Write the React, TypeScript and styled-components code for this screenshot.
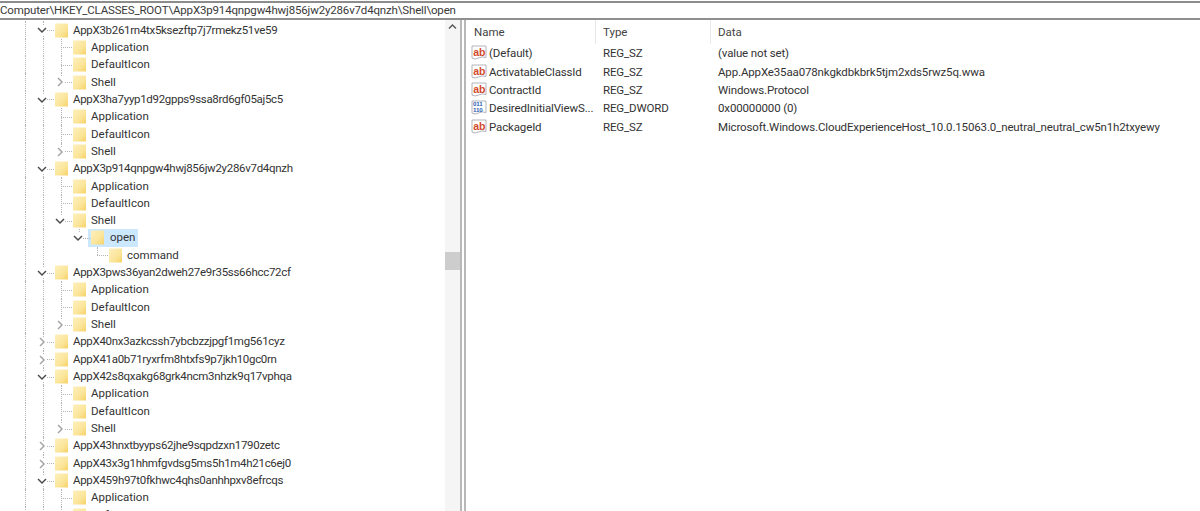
import styled, { createGlobalStyle } from "styled-components";

const GlobalStyle = createGlobalStyle`
  html, body {
    margin: 0;
    padding: 0;
    background: #fff;
  }
  body {
    font-family: Roboto, "Open Sans", sans-serif;
    color: #333;
  }
`;

const Page = styled.div`
  width: 1200px;
  height: 511px;
  display: flex;
  flex-direction: column;
  overflow: hidden;
`;

const AddressBar = styled.div`
  height: 15px;
  margin-top: 1px;
  border-top: 2px solid #8c8c8c;
  border-bottom: 2px solid #8f8f8f;
  font-size: 11.5px;
  line-height: 15px;
  letter-spacing: -0.16px;
  white-space: nowrap;
  color: #3a3a3a;
`;

const Body = styled.div`
  flex: 1;
  display: flex;
  min-height: 0;
`;

const TreePane = styled.div`
  width: 445px;
  padding-top: 1.4px;
  overflow: hidden;
`;

const Row = styled.div`
  height: 17.33px;
  display: flex;
  align-items: stretch;
  padding-left: 16px;
  font-size: 11.5px;
`;

const Guide = styled.span<{ $line: "none" | "full" | "half" }>`
  width: 18px;
  flex: none;
  position: relative;
  &::before {
    content: "";
    display: ${(p) => (p.$line === "none" ? "none" : "block")};
    position: absolute;
    left: 9px;
    top: 0;
    height: ${(p) => (p.$line === "half" ? "50%" : "100%")};
    border-left: 1px dotted #b4b4b4;
  }
`;

const Connector = styled(Guide)`
  display: flex;
  align-items: center;
  &::after {
    content: "";
    position: absolute;
    left: 9px;
    right: -2px;
    top: 50%;
    border-top: 1px dotted #b4b4b4;
  }
  svg {
    position: absolute;
    left: 3px;
    top: 4px;
    z-index: 1;
    background: #fff;
  }
`;

const Item = styled.span<{ $selected?: boolean }>`
  display: flex;
  align-items: center;
  gap: ${(p) => (p.$selected ? "6px" : "5px")};
  margin-left: ${(p) => (p.$selected ? "0" : "3px")};
  padding: ${(p) => (p.$selected ? "0 3px" : "0")};
  background: ${(p) => (p.$selected ? "#cce8ff" : "transparent")};
  white-space: nowrap;
  line-height: 17px;
`;

const Label = styled.span<{ $hash?: boolean }>`
  letter-spacing: ${(p) => (p.$hash ? "-0.3px" : "0")};
`;

const ScrollBar = styled.div`
  width: 15px;
  background: #f5f5f5;
  display: flex;
  flex-direction: column;
  align-items: center;
`;

const ArrowCell = styled.div`
  height: 17px;
  padding-top: 3px;
  display: flex;
  justify-content: center;
`;

const Thumb = styled.div`
  width: 15px;
  height: 18px;
  margin-top: 212px;
  background: #cdcdcd;
`;

const Splitter = styled.div`
  width: 6px;
  border-left: 2px solid #b8b8b8;
  border-right: 2px solid #b8b8b8;
  box-sizing: border-box;
  background: #fff;
`;

const ListPane = styled.div`
  flex: 1;
  padding-left: 5px;
  overflow: hidden;
`;

const ListHeader = styled.div`
  display: grid;
  grid-template-columns: 129px 115px 1fr;
  height: 24px;
  margin-left: -4px;
  align-items: center;
  font-size: 11.5px;
`;

const HeaderCell = styled.div<{ $divider?: boolean }>`
  height: 24px;
  line-height: 25px;
  padding-left: 7px;
  color: #444;
  border-right: ${(p) => (p.$divider ? "1px solid #e8e8e8" : "none")};
  box-sizing: border-box;
`;

const ValueRow = styled.div`
  display: grid;
  grid-template-columns: 132px 115px 1fr;
  height: 18.4px;
  align-items: center;
  font-size: 11.5px;
  letter-spacing: -0.14px;
  white-space: nowrap;
`;

const NameCell = styled.div`
  display: flex;
  align-items: center;
  gap: 2px;
`;

const Cell = styled.div`
  padding-left: 0;
`;

const Chevron = ({ open }: { open: boolean }) => (
  <svg width="10" height="10" viewBox="0 0 10 10" fill="none">
    <path
      d={open ? "M1 3 L5 7 L9 3" : "M3 1 L7 5 L3 9"}
      stroke={open ? "#4d4d4d" : "#a6a6a6"}
      strokeWidth="1.5"
    />
  </svg>
);

const Folder = () => (
  <svg width="13" height="15" viewBox="0 0 13 15">
    <defs>
      <linearGradient id="fold" x1="0" y1="0" x2="1" y2="1">
        <stop offset="0" stopColor="#fdf0bd" />
        <stop offset="0.6" stopColor="#fbe59a" />
        <stop offset="1" stopColor="#f6d265" />
      </linearGradient>
    </defs>
    <rect x="0" y="0.5" width="13" height="14" rx="0.5" fill="url(#fold)" />
  </svg>
);

const StringIcon = () => (
  <svg width="16" height="16" viewBox="0 0 16 16">
    <path
      d="M1 1 H15 V12.5 Q11 11 7.5 13 Q4 15 1 13 Z"
      fill="#fff"
      stroke="#a9a9b4"
      strokeWidth="0.9"
    />
    <text x="2.2" y="10.5" fontSize="10.5" fontWeight="700" fontFamily="Liberation Sans" fill="#d24a2c">
      ab
    </text>
  </svg>
);

const BinaryIcon = () => (
  <svg width="16" height="16" viewBox="0 0 16 16">
    <path
      d="M1 1 H15 V12.5 Q11 11 7.5 13 Q4 15 1 13 Z"
      fill="#fff"
      stroke="#a9a9b4"
      strokeWidth="0.9"
    />
    <text x="2" y="6.4" fontSize="6.2" fontWeight="700" fontFamily="Liberation Sans" fill="#2d62b5">
      011
    </text>
    <text x="2" y="12" fontSize="6.2" fontWeight="700" fontFamily="Liberation Sans" fill="#2d62b5">
      110
    </text>
  </svg>
);

type Line = "none" | "full" | "half";
type TreeRow = {
  label: string;
  guides: Line[];
  branch: Line;
  chevron?: "open" | "closed";
  selected?: boolean;
};

const root = (label: string, open: boolean): TreeRow => ({
  label,
  guides: ["full"],
  branch: "full",
  chevron: open ? "open" : "closed",
});
const child = (label: string): TreeRow => ({
  label,
  guides: ["full", "full"],
  branch: "full",
});
const shell = (open = false): TreeRow => ({
  label: "Shell",
  guides: ["full", "full"],
  branch: "half",
  chevron: open ? "open" : "closed",
});

const group = (label: string): TreeRow[] => [
  root(label, true),
  child("Application"),
  child("DefaultIcon"),
  shell(),
];

const treeRows: TreeRow[] = [
  ...group("AppX3b261rn4tx5ksezftp7j7rmekz51ve59"),
  ...group("AppX3ha7yyp1d92gpps9ssa8rd6gf05aj5c5"),
  root("AppX3p914qnpgw4hwj856jw2y286v7d4qnzh", true),
  child("Application"),
  child("DefaultIcon"),
  shell(true),
  {
    label: "open",
    guides: ["full", "full", "none"],
    branch: "half",
    chevron: "open",
    selected: true,
  },
  {
    label: "command",
    guides: ["full", "full", "none", "none"],
    branch: "half",
  },
  ...group("AppX3pws36yan2dweh27e9r35ss66hcc72cf"),
  root("AppX40nx3azkcssh7ybcbzzjpgf1mg561cyz", false),
  root("AppX41a0b71ryxrfm8htxfs9p7jkh10gc0rn", false),
  ...group("AppX42s8qxakg68grk4ncm3nhzk9q17vphqa"),
  root("AppX43hnxtbyyps62jhe9sqpdzxn1790zetc", false),
  root("AppX43x3g1hhmfgvdsg5ms5h1m4h21c6ej0", false),
  root("AppX459h97t0fkhwc4qhs0anhhpxv8efrcqs", true),
  child("Application"),
  child("DefaultIcon"),
];

const values = [
  { name: "(Default)", type: "REG_SZ", data: "(value not set)" },
  {
    name: "ActivatableClassId",
    type: "REG_SZ",
    data: "App.AppXe35aa078nkgkdbkbrk5tjm2xds5rwz5q.wwa",
  },
  { name: "ContractId", type: "REG_SZ", data: "Windows.Protocol" },
  {
    name: "DesiredInitialViewS...",
    type: "REG_DWORD",
    data: "0x00000000 (0)",
  },
  {
    name: "PackageId",
    type: "REG_SZ",
    data: "Microsoft.Windows.CloudExperienceHost_10.0.15063.0_neutral_neutral_cw5n1h2txyewy",
  },
];

const App = () => {
  return (
    <Page>
      <GlobalStyle />
      <AddressBar>
        Computer\HKEY_CLASSES_ROOT\AppX3p914qnpgw4hwj856jw2y286v7d4qnzh\Shell\open
      </AddressBar>
      <Body>
        <TreePane>
          {treeRows.map((row, i) => (
            <Row key={i}>
              {row.guides.map((g, j) => (
                <Guide key={j} $line={g} />
              ))}
              <Connector $line={row.branch}>
                {row.chevron && <Chevron open={row.chevron === "open"} />}
              </Connector>
              <Item $selected={row.selected}>
                <Folder />
                <Label $hash={row.guides.length === 1}>{row.label}</Label>
              </Item>
            </Row>
          ))}
        </TreePane>
        <ScrollBar>
          <ArrowCell>
            <svg width="9" height="7" viewBox="0 0 9 7" fill="none">
              <path d="M1 5.5 L4.5 2 L8 5.5" stroke="#555" strokeWidth="1.4" />
            </svg>
          </ArrowCell>
          <Thumb />
        </ScrollBar>
        <Splitter />
        <ListPane>
          <ListHeader>
            <HeaderCell $divider>Name</HeaderCell>
            <HeaderCell $divider>Type</HeaderCell>
            <HeaderCell>Data</HeaderCell>
          </ListHeader>
          {values.map((v) => (
            <ValueRow key={v.name}>
              <NameCell>
                {v.type === "REG_SZ" ? <StringIcon /> : <BinaryIcon />}
                {v.name}
              </NameCell>
              <Cell>{v.type}</Cell>
              <Cell>{v.data}</Cell>
            </ValueRow>
          ))}
        </ListPane>
      </Body>
    </Page>
  );
};

export default App;
